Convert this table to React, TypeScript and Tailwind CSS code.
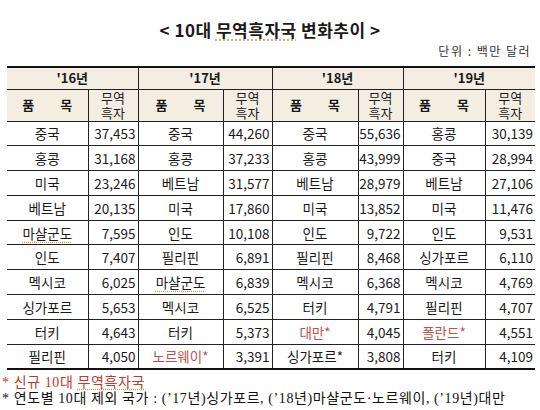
import React from 'react'

type Cell = { name: string; value: string; red?: boolean; dotted?: boolean }

const years = ["'16년", "'17년", "'18년", "'19년"]

const rows: Cell[][] = [
  [
    { name: '중국', value: '37,453' },
    { name: '중국', value: '44,260' },
    { name: '중국', value: '55,636' },
    { name: '홍콩', value: '30,139' },
  ],
  [
    { name: '홍콩', value: '31,168' },
    { name: '홍콩', value: '37,233' },
    { name: '홍콩', value: '43,999' },
    { name: '중국', value: '28,994' },
  ],
  [
    { name: '미국', value: '23,246' },
    { name: '베트남', value: '31,577' },
    { name: '베트남', value: '28,979' },
    { name: '베트남', value: '27,106' },
  ],
  [
    { name: '베트남', value: '20,135' },
    { name: '미국', value: '17,860' },
    { name: '미국', value: '13,852' },
    { name: '미국', value: '11,476' },
  ],
  [
    { name: '마샬군도', value: '7,595', dotted: true },
    { name: '인도', value: '10,108' },
    { name: '인도', value: '9,722' },
    { name: '인도', value: '9,531' },
  ],
  [
    { name: '인도', value: '7,407' },
    { name: '필리핀', value: '6,891' },
    { name: '필리핀', value: '8,468' },
    { name: '싱가포르', value: '6,110' },
  ],
  [
    { name: '멕시코', value: '6,025' },
    { name: '마샬군도', value: '6,839', dotted: true },
    { name: '멕시코', value: '6,368' },
    { name: '멕시코', value: '4,769' },
  ],
  [
    { name: '싱가포르', value: '5,653' },
    { name: '멕시코', value: '6,525' },
    { name: '터키', value: '4,791' },
    { name: '필리핀', value: '4,707' },
  ],
  [
    { name: '터키', value: '4,643' },
    { name: '터키', value: '5,373' },
    { name: '대만*', value: '4,045', red: true },
    { name: '폴란드*', value: '4,551', red: true },
  ],
  [
    { name: '필리핀', value: '4,050' },
    { name: '노르웨이*', value: '3,391', red: true },
    { name: '싱가포르*', value: '3,808' },
    { name: '터키', value: '4,109' },
  ],
]

const nameW = ['w-[81px]', 'w-[85px]', 'w-[86px]', 'w-[82px]']
const valW = ['w-[50px]', 'w-[49px]', 'w-[45px]', 'w-[50px]']

const App: React.FC = () => {
  return (
    <div className="w-[540px] h-[410px] bg-white overflow-hidden text-[#1a1a1a] font-['Noto_Sans_CJK_KR',sans-serif]">
      <h1 className="pt-[19px] text-center text-[17px] leading-[22px] font-bold tracking-[0.5px]">
        &lt; 10대{' '}
        <span className="underline decoration-dotted decoration-[#c9a15a] underline-offset-[3px]">무역흑자국</span>{' '}
        변화추이 &gt;
      </h1>
      <div className="mt-[3px] pr-[9px] text-right text-[12px] leading-[14px] tracking-[1.5px] text-[#333]">
        단위 : 백만 달러
      </div>
      <table className="ml-[7px] mt-[8px] w-[528px] border-collapse table-fixed text-[13.5px]">
        <colgroup>
          {years.map((_, i) => (
            <React.Fragment key={i}>
              <col className={nameW[i]} />
              <col className={valW[i]} />
            </React.Fragment>
          ))}
        </colgroup>
        <thead>
          <tr className="bg-[#f3ede2] border-t-2 border-[#111]">
            {years.map((y, i) => (
              <th
                key={y}
                colSpan={2}
                className={`h-[22px] font-bold text-[13px] leading-[16px] p-0 border-b border-[#222] ${i < 3 ? 'border-r border-r-[#222]' : ''}`}
              >
                {y}
              </th>
            ))}
          </tr>
          <tr className="bg-[#f3ede2]">
            {years.map((y, i) => (
              <React.Fragment key={y}>
                <th className="h-[32px] p-0 border-b border-r border-[#222] font-bold text-[13px]">
                  <div className="flex justify-center gap-[26px]">
                    <span>품</span>
                    <span>목</span>
                  </div>
                </th>
                <th
                  className={`p-0 border-b border-[#222] font-normal text-[13px] leading-[15px] text-center ${i < 3 ? 'border-r' : ''}`}
                >
                  <div>무역</div>
                  <div>흑자</div>
                </th>
              </React.Fragment>
            ))}
          </tr>
        </thead>
        <tbody>
          {rows.map((r, ri) => (
            <tr key={ri} className={ri === rows.length - 1 ? 'border-b-2 border-[#111]' : ''}>
              {r.map((c, ci) => (
                <React.Fragment key={ci}>
                  <td
                    className={`h-[24.8px] p-0 text-center leading-[16px] border-r border-[#222] ${ri < rows.length - 1 ? 'border-b' : ''} ${c.red ? 'text-[#c0504d]' : ''}`}
                  >
                    {c.dotted ? (
                      <span className="underline decoration-dotted decoration-[#c9a15a] underline-offset-[3px]">{c.name}</span>
                    ) : (
                      c.name
                    )}
                  </td>
                  <td
                    className={`p-0 pr-[2px] text-right leading-[16px] border-[#222] ${ri < rows.length - 1 ? 'border-b' : ''} ${ci < 3 ? 'border-r' : ''}`}
                  >
                    {c.value}
                  </td>
                </React.Fragment>
              ))}
            </tr>
          ))}
        </tbody>
      </table>
      <div className="mt-[5px] pl-[2px] font-['Liberation_Serif','Noto_Sans_CJK_KR',serif] text-[14px] leading-[16px] tracking-[0.6px]">
        <div className="text-[#c0392b]">
          * 신규 10대{' '}
          <span className="underline decoration-dotted decoration-[#c9a15a] underline-offset-[2px]">무역흑자국</span>
        </div>
        <div className="text-[#111]">
          * 연도별 10대 제외 국가 : (&rsquo;17년)싱가포르, (&rsquo;18년)마샬군도·노르웨이, (&rsquo;19년)대만
        </div>
      </div>
    </div>
  )
}

export default App
